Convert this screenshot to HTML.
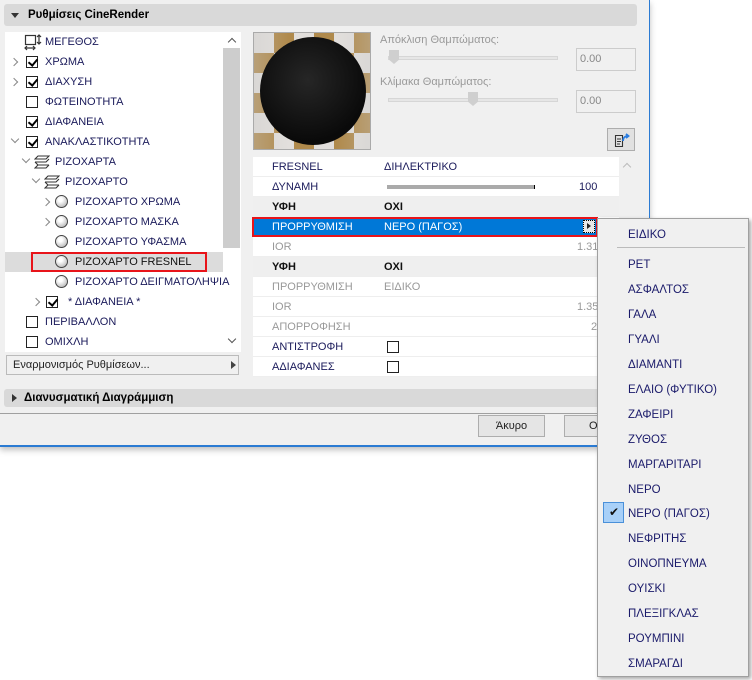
<!DOCTYPE html>
<html><head><meta charset="utf-8">
<style>
*{margin:0;padding:0;box-sizing:border-box}
body{width:752px;height:680px;background:#fff;position:relative;overflow:hidden;font-family:"Liberation Sans","DejaVu Sans",sans-serif;font-size:11px;color:#1a1a5a}
.a{position:absolute}
.dlg{left:0;top:0;width:650px;height:447px;background:#f0f0f0;border-right:1px solid #2b7bd3;border-bottom:2px solid #2b7bd3;box-shadow:0 3px 6px rgba(0,0,0,.25)}
.hdr{background:#d9d9d9;border-radius:3px;font-weight:bold;color:#000;font-size:11.5px}
.row{position:absolute;left:0;height:20px;line-height:21px;white-space:nowrap}
.cb{position:absolute;width:12px;height:12px;border:1px solid #222;background:#fff}
.cb.on::after{content:"";position:absolute;left:3px;top:0px;width:4px;height:7px;border:solid #000;border-width:0 2px 2px 0;transform:rotate(40deg)}
.arr{position:absolute;width:6px;height:6px;border:solid #888;border-width:0 1.3px 1.3px 0}
.ar{transform:rotate(-45deg)}.ad{transform:rotate(45deg)}
.sph{position:absolute;width:13px;height:13px;border-radius:50%;border:1px solid #444;background:radial-gradient(circle at 40% 35%,#fff 20%,#bbb 80%)}
.g{color:#999}
.pr{position:absolute;left:253px;width:366px;height:20px;line-height:20px;background:#fff;border-bottom:1px solid #eee}
.pr span{position:absolute}
.pr .c1{left:19px}.pr .c2{left:131px}
.m{position:absolute;left:628px;color:#1a1a6a;font-size:11.5px;margin-top:1px}
</style></head><body>
<div class="a dlg"></div>
<div class="a hdr" style="left:4px;top:4px;width:633px;height:22px;line-height:22px;padding-left:24px">Ρυθμίσεις CineRender</div>
<div class="a" style="left:11px;top:13px;border:4px solid transparent;border-top:5px solid #333;border-bottom:0"></div>

<!-- tree -->
<div class="a" style="left:5px;top:32px;width:236px;height:320px;background:#fff;overflow:hidden">
 <div class="a" style="left:218px;top:16px;width:17px;height:200px;background:#cdcdcd"></div>
 <div class="a" style="left:224px;top:7px;width:6px;height:6px;border:solid #555;border-width:1.3px 0 0 1.3px;transform:rotate(45deg)"></div>
 <div class="a" style="left:224px;top:304px;width:6px;height:6px;border:solid #555;border-width:0 1.3px 1.3px 0;transform:rotate(45deg)"></div>
 <div class="a" style="left:0;top:220px;width:218px;height:20px;background:#dcdcdc"></div>
</div>
<div class="a" style="left:5px;top:32px;width:218px;height:320px">
 <svg class="a" style="left:19px;top:2px" width="18" height="17" viewBox="0 0 18 17" fill="none" stroke="#333" stroke-width="1.2">
  <rect x="1.5" y="1.5" width="10" height="9"/><path d="M15 1v9M13 3l2-2 2 2M13 8l2 2 2-2M1 14h10M3 12l-2 2 2 2M9 12l2 2-2 2"/></svg>
 <div class="row" style="top:0;left:40px">ΜΕΓΕΘΟΣ</div>
 <div class="arr ar" style="left:6px;top:27px"></div><div class="cb on" style="left:21px;top:24px"></div><div class="row" style="top:20px;left:40px">ΧΡΩΜΑ</div>
 <div class="arr ar" style="left:6px;top:47px"></div><div class="cb on" style="left:21px;top:44px"></div><div class="row" style="top:40px;left:40px">ΔΙΑΧΥΣΗ</div>
 <div class="cb" style="left:21px;top:64px"></div><div class="row" style="top:60px;left:40px">ΦΩΤΕΙΝΟΤΗΤΑ</div>
 <div class="cb on" style="left:21px;top:84px"></div><div class="row" style="top:80px;left:40px">ΔΙΑΦΑΝΕΙΑ</div>
 <div class="arr ad" style="left:7px;top:104px"></div><div class="cb on" style="left:21px;top:104px"></div><div class="row" style="top:100px;left:40px">ΑΝΑΚΛΑΣΤΙΚΟΤΗΤΑ</div>
 <div class="arr ad" style="left:18px;top:124px"></div>
 <svg class="a" style="left:29px;top:122px" width="16" height="16" viewBox="0 0 16 16" fill="none" stroke="#333" stroke-width="1.1"><path d="M4 2h11l-3 3H1zM1 8h11l3-3M1 8l3 3h11M4 11l-3 3h11l3-3"/></svg>
 <div class="row" style="top:120px;left:50px">ΡΙΖΟΧΑΡΤΑ</div>
 <div class="arr ad" style="left:28px;top:144px"></div>
 <svg class="a" style="left:39px;top:142px" width="16" height="16" viewBox="0 0 16 16" fill="none" stroke="#333" stroke-width="1.1"><path d="M4 2h11l-3 3H1zM1 8h11l3-3M1 8l3 3h11M4 11l-3 3h11l3-3"/></svg>
 <div class="row" style="top:140px;left:60px">ΡΙΖΟΧΑΡΤΟ</div>
 <div class="arr ar" style="left:38px;top:167px"></div><div class="sph" style="left:50px;top:163px"></div><div class="row" style="top:160px;left:70px">ΡΙΖΟΧΑΡΤΟ ΧΡΩΜΑ</div>
 <div class="arr ar" style="left:38px;top:187px"></div><div class="sph" style="left:50px;top:183px"></div><div class="row" style="top:180px;left:70px">ΡΙΖΟΧΑΡΤΟ ΜΑΣΚΑ</div>
 <div class="sph" style="left:50px;top:203px"></div><div class="row" style="top:200px;left:70px">ΡΙΖΟΧΑΡΤΟ ΥΦΑΣΜΑ</div>
 <div class="a" style="left:26px;top:220px;width:176px;height:20px;border:2px solid #e8141a"></div>
 <div class="sph" style="left:50px;top:223px"></div><div class="row" style="top:220px;left:70px;color:#111">ΡΙΖΟΧΑΡΤΟ FRESNEL</div>
 <div class="sph" style="left:50px;top:243px"></div><div class="row" style="top:240px;left:70px">ΡΙΖΟΧΑΡΤΟ ΔΕΙΓΜΑΤΟΛΗΨΙΑ</div>
 <div class="arr ar" style="left:28px;top:267px"></div><div class="cb on" style="left:41px;top:264px"></div><div class="row" style="top:260px;left:63px">* ΔΙΑΦΑΝΕΙΑ *</div>
 <div class="cb" style="left:21px;top:284px"></div><div class="row" style="top:280px;left:40px">ΠΕΡΙΒΑΛΛΟΝ</div>
 <div class="cb" style="left:21px;top:304px"></div><div class="row" style="top:300px;left:40px">ΟΜΙΧΛΗ</div>
</div>
<div class="a" style="left:6px;top:355px;width:233px;height:20px;border:1px solid #bbb;background:#f0f0f0;line-height:18px;padding-left:6px;color:#222">Εναρμονισμός Ρυθμίσεων...</div>
<div class="a" style="left:231px;top:361px;border:4px solid transparent;border-left:5px solid #444;border-right:0"></div>

<div class="a hdr" style="left:4px;top:389px;width:646px;height:18px;line-height:18px;padding-left:20px">Διανυσματική Διαγράμμιση</div>
<div class="a" style="left:12px;top:394px;border:4px solid transparent;border-left:5px solid #333;border-right:0"></div>
<div class="a" style="left:0;top:413px;width:650px;height:1px;background:#a0a0a0"></div>
<div class="a" style="left:478px;top:415px;width:67px;height:22px;border:1px solid #adadad;background:#e5e5e5;text-align:center;line-height:20px;color:#222">Άκυρο</div>
<div class="a" style="left:564px;top:415px;width:67px;height:22px;border:1px solid #adadad;background:#e5e5e5;line-height:20px;padding-left:24px;color:#222">ΟΚ</div>

<!-- preview -->
<div class="a" style="left:253px;top:32px;width:118px;height:118px;border:1px solid #aaa;overflow:hidden;background:repeating-conic-gradient(#b08a4c 0 25%,#e2dfdc 0 50%) 0 0/40px 40px">
 <div class="a" style="left:0;top:0;width:118px;height:118px;background:linear-gradient(90deg,rgba(200,200,200,.35),rgba(255,255,255,0) 30%,rgba(255,255,255,0) 70%,rgba(200,200,200,.35))"></div>
 <div class="a" style="left:6px;top:4px;width:106px;height:108px;border-radius:50%;background:radial-gradient(circle at 45% 40%,#262626,#0a0a0a 70%)"></div>
</div>
<div class="a g" style="left:380px;top:34px">Απόκλιση Θαμπώματος:</div>
<div class="a" style="left:388px;top:56px;width:170px;height:4px;background:#e6e6e6;border:1px solid #d6d6d6"></div>
<div class="a" style="left:389px;top:50px;width:10px;height:14px;background:#cfcfcf;clip-path:polygon(0 0,100% 0,100% 70%,50% 100%,0 70%)"></div>
<div class="a" style="left:576px;top:48px;width:60px;height:23px;border:1px solid #ccc;background:#f0f0f0;line-height:21px;padding-left:3px;color:#888">0.00</div>
<div class="a g" style="left:380px;top:76px">Κλίμακα Θαμπώματος:</div>
<div class="a" style="left:388px;top:98px;width:170px;height:4px;background:#e6e6e6;border:1px solid #d6d6d6"></div>
<div class="a" style="left:468px;top:92px;width:10px;height:14px;background:#cfcfcf;clip-path:polygon(0 0,100% 0,100% 70%,50% 100%,0 70%)"></div>
<div class="a" style="left:576px;top:90px;width:60px;height:23px;border:1px solid #ccc;background:#f0f0f0;line-height:21px;padding-left:3px;color:#888">0.00</div>
<div class="a" style="left:607px;top:128px;width:28px;height:23px;border:1px solid #adadad;background:#e1e1e1">
 <svg class="a" style="left:6px;top:3px" width="16" height="16" viewBox="0 0 16 16" fill="none"><path d="M1.5 3.5h7v11h-7zM3 7h4M3 9.5h4M3 12h3" stroke="#333" stroke-width="1.1"/><path d="M9 9c0-3 2-5 5-5M12 2l2.5 2L12 6" stroke="#2a7de1" stroke-width="1.8"/></svg>
</div>

<!-- grid -->
<div class="a" style="left:253px;top:157px;width:366px;height:220px;background:#fff"></div>
<div class="a" style="left:624px;top:164px;width:6px;height:6px;border:solid #bbb;border-width:1.3px 0 0 1.3px;transform:rotate(45deg)"></div>
<div class="pr" style="top:157px"><span class="c1">FRESNEL</span><span class="c2">ΔΙΗΛΕΚΤΡΙΚΟ</span></div>
<div class="pr" style="top:177px"><span class="c1">ΔΥΝΑΜΗ</span><span style="left:134px;top:8px;width:148px;height:4px;background:#aaa;border-right:1px solid #000"></span><span style="left:326px">100</span></div>
<div class="pr" style="top:197px;background:#efefef;font-weight:bold;color:#111"><span class="c1">ΥΦΗ</span><span class="c2">ΟΧΙ</span></div>
<div class="pr" style="top:217px;background:#0078d7;color:#fff;width:346px;left:252px;border:2px solid #e8141a;line-height:16px"><span class="c1" style="left:18px">ΠΡΟΡΡΥΘΜΙΣΗ</span><span class="c2" style="left:130px">ΝΕΡΟ (ΠΑΓΟΣ)</span><span style="left:329px;top:1px;width:12px;height:13px;background:#e8e8e8;border:1px dotted #000"></span><span style="left:333px;top:4px;border:3px solid transparent;border-left:4px solid #222;border-right:0;width:0;height:0"></span></div>
<div class="pr g" style="top:237px"><span class="c1">IOR</span><span style="left:324px">1.31</span></div>
<div class="pr" style="top:257px;background:#efefef;font-weight:bold;color:#111"><span class="c1">ΥΦΗ</span><span class="c2">ΟΧΙ</span></div>
<div class="pr g" style="top:277px"><span class="c1">ΠΡΟΡΡΥΘΜΙΣΗ</span><span class="c2">ΕΙΔΙΚΟ</span></div>
<div class="pr g" style="top:297px"><span class="c1">IOR</span><span style="left:324px">1.35</span></div>
<div class="pr g" style="top:317px"><span class="c1">ΑΠΟΡΡΟΦΗΣΗ</span><span style="left:338px">2</span></div>
<div class="pr" style="top:337px"><span class="c1">ΑΝΤΙΣΤΡΟΦΗ</span><span class="cb" style="left:134px;top:4px"></span></div>
<div class="pr" style="top:357px"><span class="c1">ΑΔΙΑΦΑΝΕΣ</span><span class="cb" style="left:134px;top:4px"></span></div>

<!-- menu -->
<div class="a" style="left:597px;top:218px;width:152px;height:459px;background:#f0f0f0;border:1px solid #a0a0a0;box-shadow:2px 2px 4px rgba(0,0,0,.35)"></div>
<div class="m" style="top:228px">ΕΙΔΙΚΟ</div>
<div class="a" style="left:617px;top:247px;width:128px;height:1px;background:#bbb"></div>
<div class="a" style="left:603px;top:502px;width:21px;height:21px;background:#a8d0f8;border:1px solid #4a90d9"></div>
<div class="a" style="left:609px;top:505px;color:#111;font-size:12px">✔</div>
<div class="m" style="top:258px">ΡΕΤ</div>
<div class="m" style="top:283px">ΑΣΦΑΛΤΟΣ</div>
<div class="m" style="top:308px">ΓΑΛΑ</div>
<div class="m" style="top:333px">ΓΥΑΛΙ</div>
<div class="m" style="top:358px">ΔΙΑΜΑΝΤΙ</div>
<div class="m" style="top:383px">ΕΛΑΙΟ (ΦΥΤΙΚΟ)</div>
<div class="m" style="top:408px">ΖΑΦΕΙΡΙ</div>
<div class="m" style="top:433px">ΖΥΘΟΣ</div>
<div class="m" style="top:458px">ΜΑΡΓΑΡΙΤΑΡΙ</div>
<div class="m" style="top:483px">ΝΕΡΟ</div>
<div class="m" style="top:507px">ΝΕΡΟ (ΠΑΓΟΣ)</div>
<div class="m" style="top:532px">ΝΕΦΡΙΤΗΣ</div>
<div class="m" style="top:557px">ΟΙΝΟΠΝΕΥΜΑ</div>
<div class="m" style="top:582px">ΟΥΙΣΚΙ</div>
<div class="m" style="top:607px">ΠΛΕΞΙΓΚΛΑΣ</div>
<div class="m" style="top:632px">ΡΟΥΜΠΙΝΙ</div>
<div class="m" style="top:657px">ΣΜΑΡΑΓΔΙ</div>
</body></html>
